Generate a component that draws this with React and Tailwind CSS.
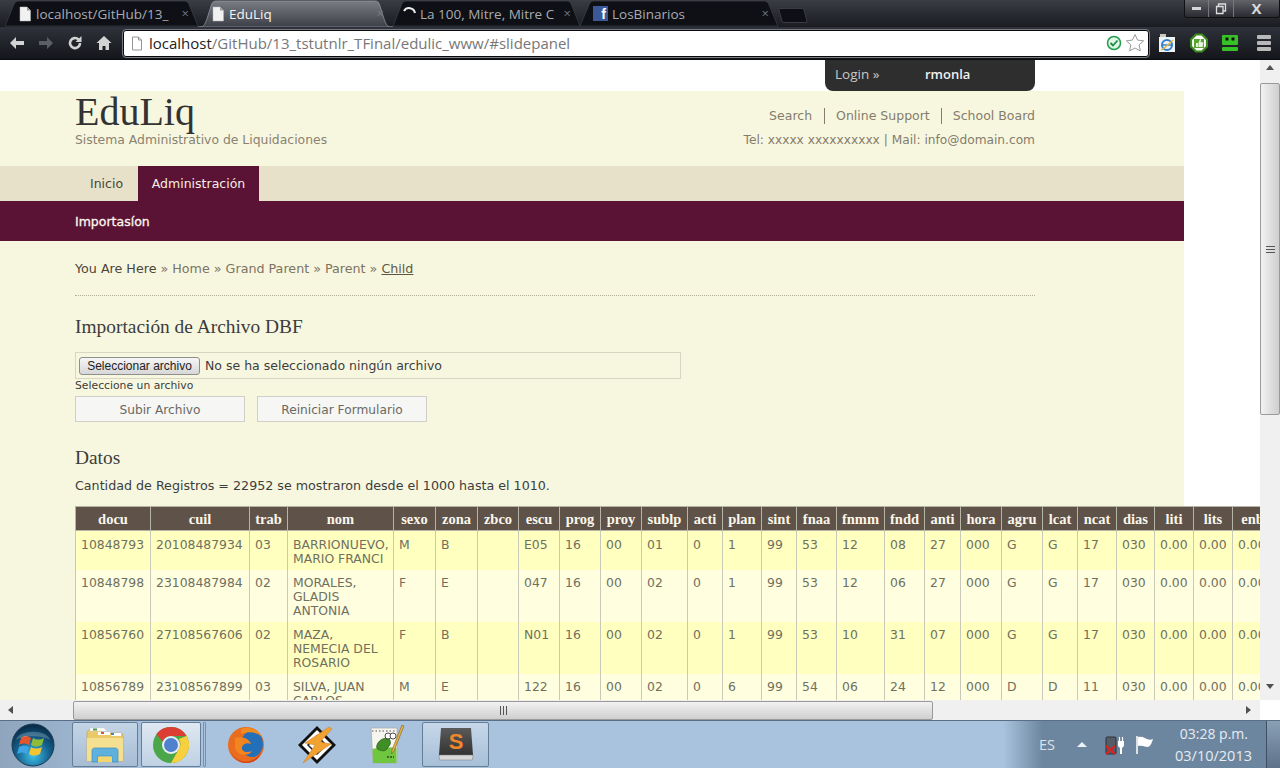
import React from "react";

const WIN = "font-['Open_Sans','DejaVu_Sans',sans-serif]";
const COLS = [75, 99, 38, 106, 42, 42, 41, 41, 41, 41, 46, 35, 39, 35, 40, 48, 40, 36, 41, 41, 35, 39, 38, 39, 39, 40];
const HEAD = ["docu","cuil","trab","nom","sexo","zona","zbco","escu","prog","proy","sublp","acti","plan","sint","fnaa","fnmm","fndd","anti","hora","agru","lcat","ncat","dias","liti","lits","enb"];
const ROWS = [
  { h: "h-[39px]", p: "pt-[7px]", c: "bg-[#ffffbf]", d: ["10848793","20108487934","03","BARRIONUEVO, MARIO FRANCI","M","B","","E05","16","00","01","0","1","99","53","12","08","27","000","G","G","17","030","0.00","0.00","0.00"] },
  { h: "h-[52px]", p: "pt-[6px]", c: "bg-[#ffffe0]", d: ["10848798","23108487984","02","MORALES, GLADIS ANTONIA","F","E","","047","16","00","02","0","1","99","53","12","06","27","000","G","G","17","030","0.00","0.00","0.00"] },
  { h: "h-[52px]", p: "pt-[6px]", c: "bg-[#ffffbf]", d: ["10856760","27108567606","02","MAZA, NEMECIA DEL ROSARIO","F","B","","N01","16","00","02","0","1","99","53","10","31","07","000","G","G","17","030","0.00","0.00","0.00"] },
  { h: "h-[52px]", p: "pt-[6px]", c: "bg-[#ffffe0]", d: ["10856789","23108567899","03","SILVA, JUAN CARLOS","M","E","","122","16","00","02","0","6","99","54","06","24","12","000","D","D","11","030","0.00","0.00","0.00"] },
];

function PageIcon() {
  return (
    <svg width="14" height="16" viewBox="0 0 14 16" className="shrink-0">
      <path d="M2 1h7l3.5 3.5V15H2z" fill="#f1f1f1" stroke="#bbb" strokeWidth="0.5" />
      <path d="M9 1v3.5h3.5" fill="#999" />
    </svg>
  );
}

function Tab({ w, active, icon, label, ml }) {
  return (
    <div className={`relative flex h-[27px] shrink-0 items-center ${w} ${ml}`}>
      <svg className="absolute inset-0 h-full w-full" viewBox="0 0 190 27" preserveAspectRatio="none">
        {active ? (
          <>
            <defs>
              <linearGradient id="tabA" x1="0" y1="0" x2="0" y2="1">
                <stop offset="0" stopColor="#7a7c82" />
                <stop offset="1" stopColor="#3c3f47" />
              </linearGradient>
            </defs>
            <path d="M0 27 C6 27 6 26 9 18 L13 5 C14 2 15 1 19 1 H172 C175 1 176 2 177 5 L181 18 C184 26 184 27 190 27 Z" fill="url(#tabA)" stroke="#9a9ca2" strokeWidth="0.7" />
          </>
        ) : (
          <path d="M0 26 L9 4 C10 2 11 1 14 1 H176 C179 1 180 2 181 4 L190 26 Z" fill="#0e1016" stroke="#3f424a" strokeWidth="0.7" />
        )}
      </svg>
      <div className="relative flex w-full items-center pl-[13px] pr-[9px]">
        {icon}
        <span className={`ml-[4px] min-w-0 flex-1 overflow-hidden whitespace-nowrap text-[13.500px] leading-[20px] ${WIN} ${active ? "text-[#f4f4f4]" : "text-[#a9abb0]"}`}>{label}</span>
        <span className={`ml-1 text-[13px] leading-none ${WIN} ${active ? "text-[#777a80]" : "text-[#70737a]"}`}>×</span>
      </div>
    </div>
  );
}

function Chrome() {
  return (
    <svg width="38" height="38" viewBox="0 0 38 38">
      <circle cx="19" cy="19" r="18" fill="#4aa648" />
      <path d="M19 1a18 18 0 0 1 15.6 9H19a9 9 0 0 0-8.2 5.2L4.2 8.2A18 18 0 0 1 19 1z" fill="#dc3e33" />
      <path d="M34.6 10A18 18 0 0 1 19 37l7.6-13.5A9 9 0 0 0 26.6 13z" fill="#f8cf3c" />
      <circle cx="19" cy="19" r="9" fill="#e9eef5" />
      <circle cx="19" cy="19" r="7" fill="#4f81cf" />
    </svg>
  );
}

function Firefox() {
  return (
    <svg width="38" height="38" viewBox="0 0 38 38">
      <circle cx="19" cy="19" r="18" fill="#ea6c1f" />
      <ellipse cx="25" cy="18" rx="11" ry="13" fill="#2470b8" />
      <path d="M14 3C22 0 31 3 35 11 30 6 22 5 14 8z" fill="#f08a22" />
      <path d="M8 12C16 10 22 13 24 18 20 16 16 18 15 21 14 26 20 27 25 25 21 31 11 30 8 22z" fill="#f2851f" />
      <path d="M4 26c4 8 12 11 19 9 5-1 9-5 11-10-1 8-8 12-15 12C12 37 6 32 4 26z" fill="#d5431b" />
    </svg>
  );
}

function Winamp() {
  return (
    <svg width="40" height="40" viewBox="0 0 40 40">
      <path d="M20 1 39 20 20 39 1 20z" fill="#111" />
      <path d="M20 5 35 20 20 35 5 20z" fill="#fff" />
      <path d="M20 11 29 20 20 29 11 20z" fill="#fff" stroke="#222" strokeWidth="1.500" />
      <path d="M32 2 L8 18 L18 20 L6 38 L34 19 L23 17 L35 4 Z" fill="#f2a230" stroke="#c87a18" strokeWidth="0.5" />
    </svg>
  );
}

function Notepad() {
  return (
    <svg width="40" height="40" viewBox="0 0 40 40">
      <path d="M4 3h26v35H6z" fill="#f6f6ee" stroke="#aaa" strokeWidth="0.8" />
      <path d="M5.500 24c8-2 16-2 24-1v15H6z" fill="#6fc63f" />
      <path d="M10 20c2-6 9-8 12-6 2 2 2 6-1 8-1 3-4 5-8 3-3 0-4-3-3-5z" fill="#3f8f26" stroke="#23541a" strokeWidth="0.7" />
      <circle cx="21" cy="11" r="3" fill="#fff" stroke="#222" strokeWidth="0.8" />
      <circle cx="26" cy="11" r="3" fill="#fff" stroke="#222" strokeWidth="0.8" />
      <path d="M5 6h24" stroke="#888" strokeWidth="1.400" strokeDasharray="1.500 2" />
      <path d="M20 32h7" stroke="#111" strokeWidth="1" strokeDasharray="2 1" />
      <path d="M37 1 27 26l-2.500 3 .5-4L35 0z" fill="#e8b54a" stroke="#7f5d1c" strokeWidth="0.6" />
    </svg>
  );
}

function Sublime() {
  return (
    <svg width="40" height="40" viewBox="0 0 40 40">
      <defs>
        <linearGradient id="subl" x1="0" y1="0" x2="0" y2="1">
          <stop offset="0" stopColor="#5a5a5a" />
          <stop offset="1" stopColor="#333" />
        </linearGradient>
      </defs>
      <path d="M5 3h30l2 27H3z" fill="url(#subl)" />
      <path d="M3 30h34l-.5 5H3.500z" fill="#d8d8d8" stroke="#777" strokeWidth="0.5" />
      <text x="20" y="24" textAnchor="middle" fontSize="22" fontWeight="700" fill="#f0872c" fontFamily="'Liberation Sans',sans-serif">S</text>
    </svg>
  );
}

function Folder() {
  return (
    <svg width="42" height="40" viewBox="0 0 42 40">
      <path d="M3 8c0-2 1-3 3-3h10l3 3h17c2 0 3 1 3 3v25H3z" fill="#e9c968" stroke="#c9a84c" strokeWidth="0.7" />
      <path d="M6 3h14l3 3H6z" fill="#fff" stroke="#ccc" strokeWidth="0.5" />
      <path d="M14 7h12v3H14z" fill="#fff" />
      <path d="M27 8h10v3H27z" fill="#fff" />
      <rect x="9" y="3.500" width="4" height="2" fill="#4a9a4a" />
      <rect x="17" y="7" width="3" height="2" fill="#d65336" />
      <rect x="27" y="8" width="3" height="2" fill="#3d87c4" />
      <path d="M3 13h36v23H3z" fill="#f5df90" />
      <path d="M8 37V26c0-2 1-3 3-3h20c2 0 3 1 3 3v11h-6v-6H14v6z" fill="#5fb1dd" stroke="#3c8dbd" strokeWidth="0.7" />
      <rect x="14" y="32" width="14" height="5" fill="#f2d56d" />
    </svg>
  );
}

function StartOrb() {
  return (
    <svg width="44" height="44" viewBox="0 0 44 44">
      <defs>
        <radialGradient id="orb" cx="50%" cy="75%" r="70%">
          <stop offset="0" stopColor="#3fc2ea" />
          <stop offset="0.55" stopColor="#15628f" />
          <stop offset="1" stopColor="#0a2e4a" />
        </radialGradient>
      </defs>
      <circle cx="22" cy="22" r="21" fill="url(#orb)" stroke="#1c3a52" strokeWidth="1" />
      <path d="M10 15c4-3 7-2 10 0l-2 7c-3-2-6-2-10 0z" fill="#e4542d" />
      <path d="M22 15c4 2 7 2 11 0l-2 7c-4 2-7 2-11 0z" fill="#8fbb3a" />
      <path d="M8 24c4-2 7-2 10 0l-2 7c-3-2-6-2-10 0z" fill="#3fa4e4" />
      <path d="M20 24c3 2 7 2 11 0l-2 7c-4 2-8 2-11 0z" fill="#f4c431" />
      <path d="M5 17C8 6 36 6 39 17 32 12 12 12 5 17z" fill="#fff" opacity="0.22" />
    </svg>
  );
}

function VArrow({ up }) {
  return (
    <div className={`flex h-[15px] items-center justify-center ${up ? "" : "mb-[6px]"}`}>
      <div className={`h-0 w-0 border-x-[4px] border-x-transparent ${up ? "border-b-[5px] border-b-[#505050]" : "border-t-[5px] border-t-[#505050]"}`} />
    </div>
  );
}

export default function App() {
  return (
    <div className="flex h-[768px] w-[1280px] flex-col overflow-hidden bg-white">
      {/* tab strip */}
      <div className="flex h-[27px] shrink-0 bg-gradient-to-b from-[#3b3d44] to-[#1a1c22]">
        <Tab ml="ml-[5px]" w="w-[193px]" icon={<PageIcon />} label="localhost/GitHub/13_" />
        <Tab w="w-[195px]" active icon={<PageIcon />} label="EduLiq" />
        <Tab w="w-[187px]" icon={
          <svg width="13" height="15" viewBox="0 0 13 15" className="-ml-[3px] shrink-0"><path d="M1 5a6 6 0 0 1 11 2" fill="none" stroke="#eee" strokeWidth="2" /></svg>
        } label="La 100, Mitre, Mitre C" />
        <Tab w="w-[198px]" icon={
          <span className="flex h-[15px] w-[15px] shrink-0 items-end justify-end bg-[#3b5998] pr-[2px] font-['Liberation_Sans',sans-serif] text-[14px] font-bold leading-[14px] text-white">f</span>
        } label="LosBinarios" />
        <div className="ml-[2px] mt-[8px] h-[15px] w-[26px] skew-x-[15deg] rounded-[2px] border border-[#3a3c44] bg-[#0d0f14]" />
        <div className="flex-1" />
        <div className="mr-0 flex h-[18px] w-[96px] items-stretch rounded-b-[3px] border border-t-0 border-[#111] bg-gradient-to-b from-[#62646a] to-[#292b31]">
          <div className="flex w-[24px] items-center justify-center border-r border-[#77797e]"><div className="h-[3px] w-[9px] bg-[#d6d6d6]" /></div>
          <div className="flex w-[25px] items-center justify-center border-r border-[#77797e]">
            <svg width="12" height="12" viewBox="0 0 12 12"><path d="M3.500 3V1h7v7H8M1.500 3.500h6.500v7H1.500z" fill="none" stroke="#ddd" strokeWidth="1.300" /></svg>
          </div>
          <div className={`flex flex-1 items-center justify-center text-[15px] font-bold leading-none text-[#d9d9d9] ${WIN}`}>X</div>
        </div>
      </div>

      {/* toolbar */}
      <div className="flex h-[33px] shrink-0 items-center bg-gradient-to-b from-[#2f323a] to-[#14161b] border-b border-[#0b0c10]">
        <div className="flex w-[123px] items-center pl-[7px]">
          <svg width="20" height="18" viewBox="0 0 20 18"><path d="M9 3 3 9l6 6v-4h8V7H9z" fill="#d3d3d3" /></svg>
          <svg width="20" height="18" viewBox="0 0 20 18" className="ml-[9px]"><path d="M11 3l6 6-6 6v-4H3V7h8z" fill="#5b5e66" /></svg>
          <svg width="18" height="18" viewBox="0 0 18 18" className="ml-[10px]"><path d="M14 9a5 5 0 1 1-1.500-3.500" fill="none" stroke="#d3d3d3" strokeWidth="2.600" /><path d="M15.500 2v6h-6z" fill="#d3d3d3" /></svg>
          <svg width="18" height="18" viewBox="0 0 18 18" className="ml-[11px]"><path d="M9 2 1.500 9H4v7h3.500v-4h3v4H14V9h2.500z" fill="#d3d3d3" /></svg>
        </div>
        <div className="flex h-[27px] w-[1026px] items-center rounded-[3px] border border-[#0a0a0a] bg-white pl-[7px] pr-[3px] outline outline-[#777a80]">
          <svg width="12" height="15" viewBox="0 0 12 15" className="shrink-0"><path d="M1.500 1h6l3 3v10h-9z M7.500 1v3h3" fill="#fff" stroke="#8a8a8a" strokeWidth="0.9" /></svg>
          <span className={`ml-[6px] flex-1 whitespace-nowrap text-[15px] leading-[20px] text-[#777] ${WIN}`}>
            <span className="text-[#222]">localhost</span>/GitHub/13_tstutnlr_TFinal/edulic_www/#slidepanel
          </span>
          <svg width="16" height="16" viewBox="0 0 16 16"><circle cx="8" cy="8" r="6.500" fill="#dff5e6" stroke="#1f9d4b" strokeWidth="1.500" /><path d="M4.500 8l2.500 2.500L11.500 5.500" fill="none" stroke="#1f8d43" strokeWidth="1.800" /></svg>
          <svg width="20" height="20" viewBox="0 0 20 20" className="ml-[3px]"><path d="M10 1.500l2.600 5.600 6 .7-4.500 4.100 1.200 6L10 15l-5.300 2.900 1.200-6L1.400 7.800l6-.7z" fill="#fff" stroke="#9a9a9a" strokeWidth="1" /></svg>
        </div>
        <div className="flex flex-1 items-center pl-[9px]">
          <svg width="18" height="20" viewBox="0 0 18 20"><path d="M1 4h16v15H1z" fill="#eef2f5" /><path d="M2 1h6v3H2z" fill="#c9c9c0" /><ellipse cx="9" cy="12" rx="5" ry="5" fill="none" stroke="#2f7fd0" strokeWidth="2" /><path d="M5 12h8" stroke="#2f7fd0" strokeWidth="1.500" /><path d="M3 17c3-1 8-6 12-10" fill="none" stroke="#e7b53a" strokeWidth="1.200" /></svg>
          <svg width="18" height="20" viewBox="0 0 18 20" className="ml-[14px]"><path d="M6 1.500h6L17 6.500v7L12 18.500H6L1 13.500v-7z" fill="#fff" stroke="#3b8a1e" strokeWidth="2.200" /><path d="M4 6h10v9H4z" fill="#5aa532" /><path d="M6 10h2v4H6zM8.500 10l1.500-4 1 .3-.4 3h2.800l-.8 4.700H8.500z" fill="#e9f2dd" /></svg>
          <svg width="18" height="18" viewBox="0 0 18 18" className="ml-[13px]"><rect x="1" y="1" width="16" height="10" rx="1" fill="#38c028" /><rect x="4.500" y="3.500" width="3" height="3" fill="#111" /><rect x="10.500" y="3.500" width="3" height="3" fill="#111" /><rect x="1" y="13" width="16" height="4" rx="1" fill="#38c028" /></svg>
          <div className="ml-[18px] flex w-[14px] flex-col gap-[2px]">
            <div className="h-[4px] rounded-[1px] bg-[#b8b8b8]" /><div className="h-[4px] rounded-[1px] bg-[#b8b8b8]" /><div className="h-[4px] rounded-[1px] bg-[#b8b8b8]" />
          </div>
        </div>
      </div>

      {/* viewport */}
      <div className="flex min-h-0 flex-1">
        <div className="min-w-0 flex-1 overflow-hidden bg-white">
          <div className="flex h-[31px] w-[1184px] justify-end pr-[149px]">
            <div className={`flex h-[31px] w-[210px] items-center rounded-b-[8px] bg-[#2e2e2e] pb-[2px] pl-[10px] text-[13.500px] ${WIN}`}>
              <span className="w-[90px] text-[#c8c8c8]">Login »</span>
              <span className="text-[13px] font-semibold text-[#f0f0f0]">rmonla</span>
            </div>
          </div>
          <div className="w-[1184px] bg-[#f7f7e0] font-['DejaVu_Sans',sans-serif] text-[13px] text-[#5e584c]">
            <div className="flex h-[75px] justify-between px-[75px] pr-[149px]">
              <div className="pt-[1px]">
                <div className="font-['Liberation_Serif',serif] text-[40px] leading-[40px] text-[#333333]">EduLiq</div>
                <div className="text-[12.400px] leading-[16px] text-[#8a8270]">Sistema Administrativo de Liquidaciones</div>
              </div>
              <div className="flex flex-col items-end pt-[17px] text-[12.500px] text-[#857c6b]">
                <div className="flex h-[16px] items-center leading-[16px]">
                  <span className="border-r border-[#857c6b] pr-[12px]">Search</span>
                  <span className="border-r border-[#857c6b] px-[11px]">Online Support</span>
                  <span className="pl-[11px]">School Board</span>
                </div>
                <div className="mt-[8px] text-[12.200px] leading-[16px]">Tel: xxxxx xxxxxxxxxx | Mail: info@domain.com</div>
              </div>
            </div>
            <div className="flex h-[35px] bg-[#e6e1c8] pl-[75px] pt-[1px]">
              <div className="flex w-[63px] items-center justify-center text-[12.500px] text-[#4a4538]">Inicio</div>
              <div className="-mt-[1px] flex w-[121px] items-center justify-center bg-[#5a1335] pt-[1px] text-[12.500px] text-[#f4efe0]">Administración</div>
            </div>
            <div className="flex h-[40px] items-center bg-[#5a1335] pl-[75px] pt-[2px] text-[12.500px] text-[#fbf8ee] [-webkit-text-stroke:0.3px_#fbf8ee]">Importasíon</div>
            <div className="w-[960px] pl-[75px] box-content">
              <div className="mr-0 w-[960px] border-b border-dotted border-[#b5b09a] pb-[18px] pt-[20px] text-[12.700px] leading-[16px] text-[#7c7362]">
                <span className="text-[#4a4538]">You Are Here</span> » Home » Grand Parent » Parent » <span className="text-[#5f5746] underline">Child</span>
              </div>
              <h2 className="mt-[19px] font-['Liberation_Serif',serif] text-[19.400px] leading-[24px] text-[#3c3c3c]">Importación de Archivo DBF</h2>
              <div className="mt-[13px] flex h-[27px] w-[606px] items-center border border-[#d6d6c2] pl-[3px]">
                <button className="h-[18px] w-[121px] rounded-[3px] border border-[#8f8f8f] bg-gradient-to-b from-[#f6f6f6] to-[#d7d7d7] font-['Liberation_Sans',sans-serif] text-[12px] leading-[14px] text-[#222]">Seleccionar archivo</button>
                <span className="ml-[5px] pt-[2px] text-[12.500px] text-[#3d3d3d]">No se ha seleccionado ningún archivo</span>
              </div>
              <div className="h-[15px] text-[10.800px] leading-[14px] text-[#3c3c3c]">Seleccione un archivo</div>
              <div className="mt-[2px] flex gap-[12px]">
                <button className="h-[26px] w-[170px] border border-[#d0d0c8] bg-[#f6f6f4] pt-[2px] text-[12.200px] text-[#6a6a62]">Subir Archivo</button>
                <button className="h-[26px] w-[170px] border border-[#d0d0c8] bg-[#f6f6f4] pt-[2px] text-[12.200px] text-[#6a6a62]">Reiniciar Formulario</button>
              </div>
              <h2 className="mt-[24px] font-['Liberation_Serif',serif] text-[19.400px] leading-[24px] text-[#3c3c3c]">Datos</h2>
              <div className="mt-[8px] h-[28px] text-[12.680px] leading-[16px] text-[#3d3d3d]">Cantidad de Registros = 22952 se mostraron desde el 1000 hasta el 1010.</div>
              <table className="table-fixed border-collapse w-[1197px]">
                <colgroup>
                  {COLS.map((w, i) => <col key={i} style={{ width: w }} />)}
                </colgroup>
                <thead>
                  <tr className="h-[24px] bg-[#5f5248]">
                    {HEAD.map((h) => (
                      <th key={h} className="border border-[#b5b5a6] p-0 text-center font-['Liberation_Serif',serif] text-[14.500px] font-bold leading-[16px] text-[#faf6ea]">{h}</th>
                    ))}
                  </tr>
                </thead>
                <tbody>
                  {ROWS.map((r) => (
                    <tr key={r.d[0]} className={`${r.h} ${r.c}`}>
                      {r.d.map((v, i) => (
                        <td key={i} className={`overflow-hidden border-x border-[#c9c9ba] px-[5px] ${r.p} align-top text-[12.400px] leading-[14px] text-[#70705f]`}>{v}</td>
                      ))}
                    </tr>
                  ))}
                </tbody>
              </table>
              <div className="h-[40px]" />
            </div>
          </div>
        </div>
        {/* vertical scrollbar */}
        <div className="flex w-[20px] shrink-0 flex-col bg-[#f0f0f0]">
          <VArrow up />
          <div className="relative mt-[8px] flex h-[332px] items-center justify-center rounded-[2px] border border-[#9a9a9a] bg-gradient-to-r from-[#f2f2f2] to-[#cfcfcf]">
            <div className="flex w-[9px] flex-col gap-[2px]"><div className="h-px bg-[#555]" /><div className="h-px bg-[#555]" /><div className="h-px bg-[#555]" /></div>
          </div>
          <div className="flex-1" />
          <VArrow />
        </div>
      </div>

      {/* horizontal scrollbar */}
      <div className="flex h-[20px] shrink-0">
        <div className="flex w-[1260px] items-center bg-[#f0f0f0]">
          <div className="flex w-[20px] justify-center"><div className="h-0 w-0 border-y-[4px] border-r-[5px] border-y-transparent border-r-[#505050]" /></div>
          <div className="ml-[53px] flex h-[19px] w-[860px] items-center justify-center rounded-[2px] border border-[#9a9a9a] bg-gradient-to-b from-[#f2f2f2] to-[#cfcfcf]">
            <div className="flex h-[9px] gap-[2px]"><div className="w-px bg-[#555]" /><div className="w-px bg-[#555]" /><div className="w-px bg-[#555]" /></div>
          </div>
          <div className="flex-1" />
          <div className="mr-[2px] flex w-[20px] justify-center"><div className="h-0 w-0 border-y-[4px] border-l-[5px] border-y-transparent border-l-[#505050]" /></div>
        </div>
        <div className="flex-1 bg-white" />
      </div>

      {/* taskbar */}
      <div className="flex h-[48px] shrink-0 items-stretch border-t border-[#5a6f86] bg-gradient-to-r from-[#8fa5bd] via-[#a9c3de] via-[12%] to-[#a9c3de]">
        <div className="flex w-[72px] items-center pl-[11px]"><StartOrb /></div>
        <div className="my-[1px] flex w-[66px] items-center justify-center rounded-[2px] border border-[#667d96] bg-gradient-to-b from-[#c3d4e6] to-[#a7bdd4]"><Folder /></div>
        <div className="my-[1px] ml-[3px] flex w-[60px] items-center justify-center rounded-[2px] border border-[#667d96] bg-gradient-to-b from-[#dfe8f2] to-[#bfd1e4]"><Chrome /></div>
        <div className="my-[1px] ml-[2px] w-[3px] rounded-[1px] border border-[#7b90a8]" />
        <div className="flex w-[76px] items-center justify-center pl-[4px]"><Firefox /></div>
        <div className="flex w-[70px] items-center justify-center"><Winamp /></div>
        <div className="flex w-[70px] items-center justify-center"><Notepad /></div>
        <div className="my-[1px] flex w-[67px] items-center justify-center rounded-[2px] border border-[#667d96] bg-gradient-to-b from-[#c6d7e9] to-[#a7bfd8]"><Sublime /></div>
        <div className="flex flex-1 items-center justify-end bg-gradient-to-r from-transparent from-[65%] to-[#6d869f] to-[70%]">
          <span className={`mr-[22px] text-[14.500px] text-[#dbe4ec] ${WIN}`}>ES</span>
          <div className="mr-[18px] h-0 w-0 border-x-[5px] border-b-[5px] border-x-transparent border-b-[#eef2f6]" />
          <svg width="20" height="22" viewBox="0 0 20 22" className="mr-[10px]">
            <rect x="1" y="3" width="10" height="17" rx="1" fill="#555c66" stroke="#2e3238" />
            <path d="M1 12l9 8M10 12l-9 8" stroke="#e02020" strokeWidth="2.200" />
            <path d="M13 7h6v5l-2 2v6h-2v-6l-2-2z" fill="#fff" />
            <path d="M14.500 3v4M17.500 3v4" stroke="#fff" strokeWidth="1.200" />
          </svg>
          <svg width="20" height="20" viewBox="0 0 20 20" className="mr-[13px]"><path d="M2 1v18" stroke="#fff" strokeWidth="1.500" /><path d="M3 2c5-1 6 1 9 2 2 1 4 1 6 0-1 3-2 7-5 8-3 0-5-2-10-1z" fill="#fff" /></svg>
          <div className={`mr-[14px] flex w-[84px] flex-col items-end text-[14.500px] leading-[22px] text-[#e6ecf2] ${WIN}`}>
            <span className="pr-[4px] text-[14px]">03:28 p.m.</span>
            <span>03/10/2013</span>
          </div>
          <div className="h-full w-[14px] border-l border-[#3f5064] bg-gradient-to-b from-[#8aa0b5] to-[#5e7389]" />
        </div>
      </div>
    </div>
  );
}
